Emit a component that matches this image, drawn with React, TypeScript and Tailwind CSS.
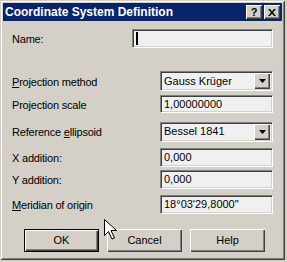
import React from 'react';

const font = { fontFamily: '"Liberation Sans", Arial, sans-serif' };

const sunken =
  'border border-t-[#808080] border-l-[#808080] border-b-white border-r-white shadow-[inset_1px_1px_0_#404040,inset_-1px_-1px_0_#d4d0c8] bg-[#f0f0f0]';
const raised =
  'shadow-[inset_1px_1px_0_#ffffff,inset_-1px_-1px_0_#404040,inset_-2px_-2px_0_#808080] bg-[#d4d0c8]';

function Field({ value, width = 'w-[113px]', height = 'h-[19px]', caret = false }: { value?: string; width?: string; height?: string; caret?: boolean }) {
  return (
    <div className={`${sunken} ${width} ${height} flex items-center pl-[3px] text-[11px] text-black`}>
      {caret && <span className="w-[2px] h-[13px] bg-black" />}
      {value}
    </div>
  );
}

function Combo({ value }: { value: string }) {
  return (
    <div className={`${sunken} w-[113px] h-[20px] flex items-center pl-[3px] pr-[2px] text-[11px] text-black`}>
      <span className="flex-1">{value}</span>
      <span className={`${raised} w-[16px] h-[16px] flex items-center justify-center`}>
        <svg width="7" height="4" viewBox="0 0 7 4">
          <path d="M0 0h7L3.5 4z" fill="#000" />
        </svg>
      </span>
    </div>
  );
}

function Label({ children, className = '' }: { children: React.ReactNode; className?: string }) {
  return <span className={`text-[11px] tracking-[-0.2px] text-black ${className}`}>{children}</span>;
}

function Row({ label, children, className = '' }: { label: React.ReactNode; children: React.ReactNode; className?: string }) {
  return (
    <div className={`flex items-center justify-between pr-[9px] ${className}`}>
      <Label className="pt-[2px]">{label}</Label>
      {children}
    </div>
  );
}

function Button({ label, isDefault = false }: { label: string; isDefault?: boolean }) {
  return (
    <div
      className={`w-[75px] h-[23px] flex items-center justify-center text-[11px] text-black bg-[#d4d0c8] ${
        isDefault
          ? 'border border-black shadow-[inset_1px_1px_0_#ffffff,inset_-1px_-1px_0_#404040,inset_-2px_-2px_0_#808080]'
          : raised
      }`}
    >
      {label}
    </div>
  );
}

export default function App() {
  return (
    <div className="w-[287px] h-[262px] bg-[#d4d0c8] relative select-none" style={font}>
      <div className="w-[285px] h-[260px] bg-[#d4d0c8] p-[3px] shadow-[inset_1px_1px_0_#d4d0c8,inset_-1px_-1px_0_#404040,inset_2px_2px_0_#ffffff,inset_-2px_-2px_0_#808080] flex flex-col">
        {/* title bar */}
        <div className="h-[18px] bg-[#0a246a] flex items-center pl-[2px] pr-[2px]">
          <span className="flex-1 text-white font-bold text-[12px]">Coordinate System Definition</span>
          <span className={`${raised} w-[16px] h-[14px] flex items-center justify-center text-[11px] font-bold text-black leading-none`}>?</span>
          <span className={`${raised} ml-[2px] w-[16px] h-[14px] flex items-center justify-center`}>
            <svg width="8" height="7" viewBox="0 0 8 7">
              <path d="M0 0h2l2 2.5L6 0h2L5 3.5 8 7H6L4 4.5 2 7H0l3-3.5z" fill="#000" />
            </svg>
          </span>
        </div>

        <div className="flex flex-col pl-[9px]">
          <Row label="Name:" className="mt-[8px]">
            <Field width="w-[141px]" caret />
          </Row>
          <Row label={<><u>P</u>rojection method</>} className="mt-[23px]">
            <Combo value="Gauss Krüger" />
          </Row>
          <Row label="Projection scale" className="mt-[4px]">
            <Field value="1,00000000" height="h-[18px]" />
          </Row>
          <Row label={<>Reference <u>e</u>llipsoid</>} className="mt-[8px]">
            <Combo value="Bessel 1841" />
          </Row>
          <Row label="X addition:" className="mt-[6px]">
            <Field value="0,000" />
          </Row>
          <Row label="Y addition:" className="mt-[3px]">
            <Field value="0,000" />
          </Row>
          <Row label={<><u>M</u>eridian of origin</>} className="mt-[6px]">
            <Field value={'18°03\'29,8000"'} />
          </Row>
          <div className="flex gap-[8px] mt-[15px] pl-[12px]">
            <Button label="OK" isDefault />
            <Button label="Cancel" />
            <Button label="Help" />
          </div>
        </div>
      </div>

      {/* mouse pointer */}
      <svg className="absolute left-[104px] top-[219px]" width="13" height="21" viewBox="0 0 13 21">
        <path d="M0.5 0.5v16l4-4 3.5 7.5 2.5-1-3.5-7.5h5.5z" fill="#fff" stroke="#000" strokeWidth="1" />
      </svg>
    </div>
  );
}
